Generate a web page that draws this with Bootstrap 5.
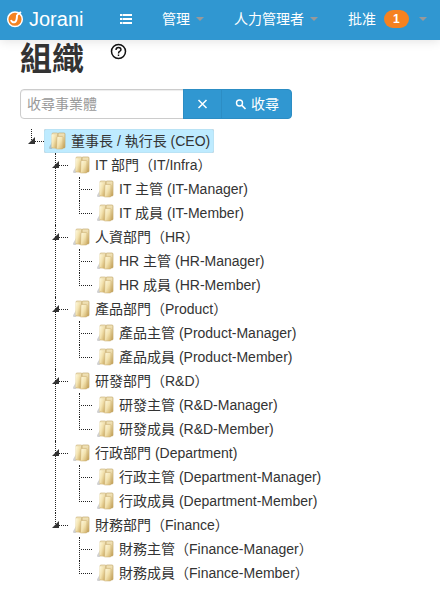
<!DOCTYPE html>
<html lang="zh-Hant">
<head>
<meta charset="utf-8">
<meta name="viewport" content="width=device-width, initial-scale=1">
<title>Jorani - 組織</title>
<link href="https://cdn.jsdelivr.net/npm/bootstrap@5.3.0/dist/css/bootstrap.min.css" rel="stylesheet">
<style>
body { font: 14px/20px "Liberation Sans", "Noto Sans CJK SC", sans-serif; color: #333; overflow-x: hidden; }
.topbar { background: #3097d1; height: 40px; padding: 0 0 0 6px; box-shadow: 0 1px 10px rgba(0,0,0,.12); }
.topbar a { color: #fff; text-decoration: none; white-space: nowrap; }
.brand { font-size: 20px; gap: 5px; width: 99px; padding-bottom: 2px; }
.menu-link { padding: 0 15px 2px; gap: 6px; height: 40px; }
.arrow { border: 4px solid transparent; border-top-color: #999; border-bottom: 0; }
.count { background: #f58220; font-size: 12px; line-height: 18px; padding: 0 9px; margin: 0 4px 0 2px; border-radius: 9px; }
.content { padding: 0 20px; }
.title { font-size: 32px; line-height: 40px; gap: 26px; height: 49px; }
.title h1 { font-size: 32px; line-height: 38px; font-weight: 700; margin: 0; }
.help { line-height: 0; color: #111; margin-top: 3px; }
.search { height: 30px; }
.search > .form-control { width: 164px; flex: none; font-size: 14px; line-height: 20px; padding: 4px 6px; border-color: #ccc; border-radius: 4px; box-shadow: inset 0 1px 1px rgba(0,0,0,.075); }
.search > .form-control::placeholder { color: #999; }
.search .btn { background: #3097d1; color: #fff; font-size: 14px; line-height: 20px; padding: 4px 12px; border-color: #2c8dc4; border-radius: 4px; }
.tree, .tree ul { list-style: none; margin: 0; padding: 0; }
.tree { margin-top: 10px; }
.tree li { position: relative; padding-left: 24px; }
.tree li::before { content: ""; position: absolute; left: 11px; top: 0; bottom: 0; border-left: 1px dotted #222; }
.tree li:last-child::before { bottom: auto; height: 13px; }
.tree li::after { content: ""; position: absolute; left: 13px; top: 12px; width: 11px; border-top: 1px dotted #222; }
.toggle { position: absolute; left: 8px; top: 8px; width: 7px; height: 7px; padding: 0; border: 0; background: #333; clip-path: polygon(100% 0, 100% 100%, 0 100%); z-index: 1; }
.node { display: inline-flex; align-items: center; height: 24px; line-height: 24px; padding-right: 4px; gap: 3px; color: #333; text-decoration: none; white-space: nowrap; border-radius: 2px; vertical-align: top; }
.node svg { width: 24px; height: 24px; flex: none; }
.node.selected { background: #beebff; box-shadow: inset 0 0 1px #999; }
</style>
<script src="https://cdn.jsdelivr.net/npm/bootstrap@5.3.0/dist/js/bootstrap.bundle.min.js"></script>
</head>
<body>
<svg class="position-absolute" width="0" height="0" aria-hidden="true">
<defs>
<linearGradient id="fold" x2="1" y2="1"><stop stop-color="#fffae0"/><stop offset=".5" stop-color="#f3e3b0"/><stop offset="1" stop-color="#cfae66"/></linearGradient>
<linearGradient id="back" x2="0" y2="1"><stop stop-color="#f3e6bd"/><stop offset="1" stop-color="#c9a65c"/></linearGradient>
<symbol id="folder" viewBox="0 0 24 24">
<path d="M5 18.500 8 13V20H6Q5 20 5 18.500Z" fill="#777" opacity=".35"/>
<path d="M8 5Q8 4 9 4H13Q14 4 14 5V19H8Z" fill="url(#back)" stroke="#c8ad70" stroke-width=".6"/>
<path d="M14 5Q14 4 15 4H20Q21 4 21 5V18Q21 19 20 19H14Z" fill="url(#back)" stroke="#b99a57" stroke-width=".6"/>
<path d="M7.500 6Q7.500 5 8.500 5.200L12 6V19.500L8 18.500Q7.500 18.500 7.500 18Z" fill="url(#fold)"/>
<path d="M13 8.500Q13 7.500 14 7.500H18Q19 7.500 19 8.500V19Q19 20 18 20H12.500Z" fill="url(#fold)" stroke="#c8ad70" stroke-width=".5"/>
</symbol>
</defs>
</svg>
<nav class="topbar d-flex align-items-center">
<a class="brand d-flex align-items-center" href="#"><svg width="18" height="18" viewBox="0 0 18 18"><circle cx="9" cy="9.300" r="7.300" fill="#f58220" stroke="#fff" stroke-width="1.500"/><path d="M5 10Q6 13 9 12Q11 11 11 5M11 5 15 2" fill="none" stroke="#fff" stroke-width="2"/></svg>Jorani</a>
<a class="menu-link d-flex align-items-center" href="#" aria-label="選單"><svg width="12" height="10" viewBox="0 0 12 10" fill="#fff"><path d="M0 0h2v2H0zM3 0h9v2H3zM0 4h2v2H0zM3 4h9v2H3zM0 8h2v2H0zM3 8h9v2H3z"/><path d="M2 0h1v2H2zM2 4h1v2H2zM2 8h1v2H2z" opacity=".5"/></svg></a>
<a class="menu-link d-flex align-items-center" href="#">管理<span class="arrow"></span></a>
<a class="menu-link d-flex align-items-center" href="#">人力管理者<span class="arrow"></span></a>
<a class="menu-link d-flex align-items-center pe-0" href="#">批准<span class="count fw-bold">1</span><span class="arrow"></span></a>
</nav>
<main class="content">
<div class="title d-flex align-items-start"><h1>組織</h1><a class="help" href="#" aria-label="說明"><svg width="17" height="17" viewBox="0 0 17 17" fill="none" stroke="currentColor"><circle cx="8.500" cy="8.500" r="7" stroke-width="1.500"/><path d="M6 7Q6 4.500 8.500 4.500T11 6.700Q11 7.700 9.500 8.500 8.500 9 8.500 10.500M8.500 11.500V13" stroke-width="1.400"/></svg></a></div>
<form class="search input-group flex-nowrap">
<input class="form-control" type="text" placeholder="收尋事業體" aria-label="收尋事業體">
<button class="btn" type="button" aria-label="清除"><svg class="d-block" width="13" height="10" viewBox="0 0 13 10"><path d="M2.500 1 10.500 9M10.500 1 2.500 9" stroke="#fff" stroke-width="1.500"/></svg></button>
<button class="btn d-flex align-items-center gap-1" type="button"><svg width="13" height="13" viewBox="0 0 13 13" fill="none" stroke="#fff"><circle cx="5.500" cy="5" r="3" stroke-width="1.400"/><path d="M7.500 7 11.500 11" stroke-width="1.700"/></svg>收尋</button>
</form>
<ul class="tree">
<li><button class="toggle" aria-label="收合"></button><a class="node selected" href="#"><svg><use href="#folder"/></svg>董事長 / 執行長 (CEO)</a>
<ul>
<li><button class="toggle" aria-label="收合"></button><a class="node" href="#"><svg><use href="#folder"/></svg>IT 部門（IT/Infra）</a>
<ul>
<li><a class="node" href="#"><svg><use href="#folder"/></svg>IT 主管 (IT-Manager)</a></li>
<li><a class="node" href="#"><svg><use href="#folder"/></svg>IT 成員 (IT-Member)</a></li>
</ul></li>
<li><button class="toggle" aria-label="收合"></button><a class="node" href="#"><svg><use href="#folder"/></svg>人資部門（HR）</a>
<ul>
<li><a class="node" href="#"><svg><use href="#folder"/></svg>HR 主管 (HR-Manager)</a></li>
<li><a class="node" href="#"><svg><use href="#folder"/></svg>HR 成員 (HR-Member)</a></li>
</ul></li>
<li><button class="toggle" aria-label="收合"></button><a class="node" href="#"><svg><use href="#folder"/></svg>產品部門（Product）</a>
<ul>
<li><a class="node" href="#"><svg><use href="#folder"/></svg>產品主管 (Product-Manager)</a></li>
<li><a class="node" href="#"><svg><use href="#folder"/></svg>產品成員 (Product-Member)</a></li>
</ul></li>
<li><button class="toggle" aria-label="收合"></button><a class="node" href="#"><svg><use href="#folder"/></svg>研發部門（R&amp;D）</a>
<ul>
<li><a class="node" href="#"><svg><use href="#folder"/></svg>研發主管 (R&amp;D-Manager)</a></li>
<li><a class="node" href="#"><svg><use href="#folder"/></svg>研發成員 (R&amp;D-Member)</a></li>
</ul></li>
<li><button class="toggle" aria-label="收合"></button><a class="node" href="#"><svg><use href="#folder"/></svg>行政部門 (Department)</a>
<ul>
<li><a class="node" href="#"><svg><use href="#folder"/></svg>行政主管 (Department-Manager)</a></li>
<li><a class="node" href="#"><svg><use href="#folder"/></svg>行政成員 (Department-Member)</a></li>
</ul></li>
<li><button class="toggle" aria-label="收合"></button><a class="node" href="#"><svg><use href="#folder"/></svg>財務部門（Finance）</a>
<ul>
<li><a class="node" href="#"><svg><use href="#folder"/></svg>財務主管（Finance-Manager）</a></li>
<li><a class="node" href="#"><svg><use href="#folder"/></svg>財務成員（Finance-Member）</a></li>
</ul></li>
</ul></li>
</ul>
</main>
</body>
</html>
